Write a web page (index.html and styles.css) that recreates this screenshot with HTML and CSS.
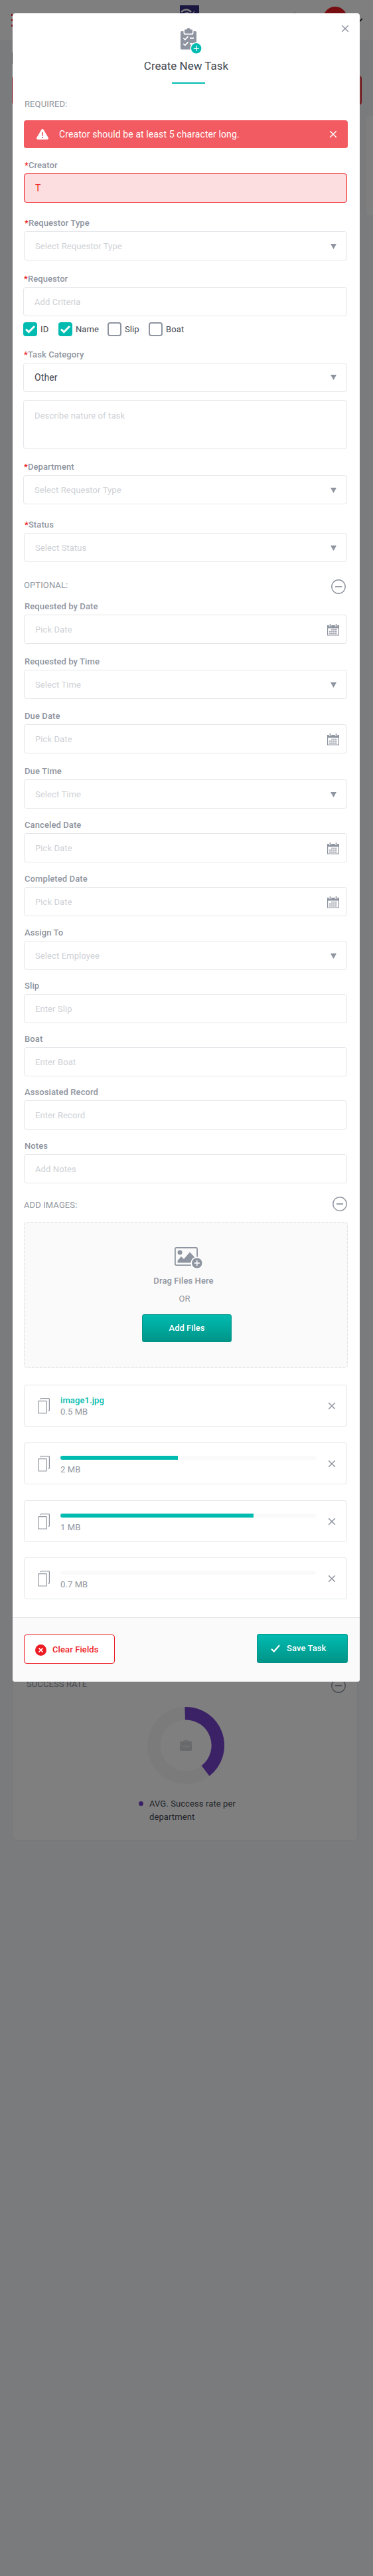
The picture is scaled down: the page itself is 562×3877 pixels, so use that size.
FILE: index.html
```html
<!DOCTYPE html>
<html lang="en">
<head>
<meta charset="utf-8">
<title>Create New Task</title>
<link rel="stylesheet" href="styles.css">
</head>
<body>
<svg class="sprite" aria-hidden="true">
  <symbol id="close" viewBox="0 0 12 12"><path d="M1.2 1.2l9.6 9.6M10.8 1.2L1.2 10.8" fill="none" stroke="currentColor" stroke-width="1.5"/></symbol>
  <symbol id="minus" viewBox="0 0 22 22"><circle cx="11" cy="11" r="10.2" fill="none" stroke="currentColor" stroke-width="1.4"/><path d="M6 11h10" stroke="currentColor" stroke-width="1.8"/></symbol>
  <symbol id="arrow" viewBox="0 0 9 8"><path d="M0 0h9L4.5 8z" fill="currentColor"/></symbol>
  <symbol id="calendar" viewBox="0 0 18 18">
    <path d="M0 2h18v15.500H0z" fill="currentColor"/><path d="M1.200 6.500h15.600v10H1.200z" fill="#fff"/>
    <path d="M4.500 0v4M13.500 0v4" stroke="#fff" stroke-width="3.600"/>
    <path d="M4.500 .8v3M13.500 .8v3" stroke="currentColor" stroke-width="1.700" stroke-linecap="round"/>
    <path d="M6.200 8.600h9M3.200 11.500h12M3.200 14.500h12" stroke="currentColor" stroke-width="1.900" stroke-dasharray="2 1"/>
  </symbol>
  <symbol id="copy" viewBox="0 0 18 24"><rect x=".6" y="4.600" width="12.800" height="18.400" rx="1" fill="none" stroke="currentColor" stroke-width="1.200"/><path d="M4.200 2.200V1.600q0-1 1-1h11.200q1 0 1 1v16.600q0 1-1 1h-.8" fill="none" stroke="currentColor" stroke-width="1.200"/></symbol>
  <symbol id="tick" viewBox="0 0 21 21"><path d="M4 10.500l4.300 4.200L17 6" fill="none" stroke="#fff" stroke-width="3"/></symbol>
</svg>

<div class="page">
  <header class="topbar">
    <span class="menu"><i></i><i></i><i></i></span>
    <svg class="logo" viewBox="0 0 29 29"><path fill="#352e83" d="M0 0h29v29H0z"/><path d="M2 10Q10 3 17 10M7 13q4-3 7 0" fill="none" stroke="#fff" stroke-width="2.500"/><path d="M19 13l3-4" stroke="#fff" stroke-width="1.200"/></svg>
    <span class="bell"></span>
    <span class="avatar"></span>
    <svg class="chev" viewBox="0 0 10 6"><path d="M1 1l4 4 4-4" fill="none" stroke="#000" stroke-width="1.500"/></svg>
  </header>
  <div class="heading-mark"></div>
  <div class="banner"></div>
  <div class="side-card"></div>
  <section class="rate">
    <div class="rate-head"><span>SUCCESS RATE</span><svg class="minus"><use href="#minus"/></svg></div>
    <svg class="donut" viewBox="-58 -58 116 116">
      <circle r="48.300" fill="none" stroke="#f6f6f6" stroke-width="19.400"/>
      <path d="M-1.300-48.300A48.300 48.300 0 0 1 29.600 38.200" fill="none" stroke="#7642cc" stroke-width="19.400"/>
      <g fill="#d0d2d6"><path d="M-9-6h18v12.500q0 1.500-1.500 1.500h-15q-1.500 0-1.500-1.500z"/><path d="M-3.500-6q0-1.700 1.500-1.700h4q1.500 0 1.500 1.700" fill="none" stroke="#d0d2d6"/><path d="M-8-4q1 6 4.500 6h7q3.500 0 4.500-6" fill="none" stroke="#f2f2f2"/><ellipse cy="1.300" rx="2.500" ry="1.600" stroke="#f2f2f2"/></g>
    </svg>
    <div class="legend"><i></i><span>AVG. Success rate per<br>department</span></div>
  </section>
</div>
<div class="overlay"></div>

<main class="modal">
  <div class="head">
    <svg class="dismiss"><use href="#close"/></svg>
    <svg class="clip" viewBox="0 0 32 40">
      <path d="M1.500 5H22.500q1.500 0 1.500 1.500V31q0 1.500-1.500 1.500h-21Q0 32.500 0 31V6.500Q0 5 1.500 5z" fill="#8f95a0"/>
      <path d="M4.500 3.500H19.500V8q0 2.300-2 2.300H6.500q-2 0-2-2.300z" fill="#fff"/>
      <path d="M6 2.500h3Q9.500 0 12 0t3 2.500h3V7q0 1.500-1.500 1.500h-9Q6 8.500 6 7z" fill="#8f95a0"/>
      <path d="M4.300 15.300l2.500 2.300 4.700-4.800M4.300 23.800l2.500 2.300 4.700-4.800M14 15.500h6M14 24h4" fill="none" stroke="#fff" stroke-width="1.800"/>
      <circle cx="23.700" cy="30.800" r="9.200" fill="#fff"/><circle cx="23.700" cy="30.800" r="7.700" fill="#00bbb0"/>
      <path d="M19.700 30.800h8M23.700 26.800v8" stroke="#fff" stroke-width="1.400"/>
    </svg>
    <h1>Create New Task</h1>
    <div class="rule"></div>
  </div>

  <form class="body">
    <div class="section first">REQUIRED:</div>
    <div class="alert">
      <svg class="warn" viewBox="0 0 18 16"><path d="M7.300 1.200Q9-1 10.700 1.200L17.600 13q1 2.600-1.300 3H1.700Q-.6 15.600.4 13z" fill="#fff"/><path d="M9 5v5.500M9 12v2" stroke="#f15b61" stroke-width="1.700"/></svg>
      <span>Creator should be at least 5 character long.</span>
      <svg class="x"><use href="#close"/></svg>
    </div>
    <div class="field g24"><label><b>*</b>Creator</label><div class="box error">T</div></div>
    <div class="field g29"><label><b>*</b>Requestor Type</label><div class="box">Select Requestor Type<svg class="arrow"><use href="#arrow"/></svg></div></div>
    <div class="field g26 wide"><label><b>*</b>Requestor</label><div class="box">Add Criteria</div></div>
    <div class="checks">
      <span class="check c1"><i class="on"><svg><use href="#tick"/></svg></i>ID</span>
      <span class="check c2"><i class="on"><svg><use href="#tick"/></svg></i>Name</span>
      <span class="check c3"><i></i>Slip</span>
      <span class="check"><i></i>Boat</span>
    </div>
    <div class="field g26 wide"><label><b>*</b>Task Category</label><div class="box value">Other<svg class="arrow"><use href="#arrow"/></svg></div></div>
    <div class="field wide area"><div class="box">Describe nature of task</div></div>
    <div class="field g25 wide"><label><b>*</b>Department</label><div class="box">Select Requestor Type<svg class="arrow"><use href="#arrow"/></svg></div></div>
    <div class="field g29"><label><b>*</b>Status</label><div class="box">Select Status<svg class="arrow"><use href="#arrow"/></svg></div></div>

    <div class="section optional"><span>OPTIONAL:</span><svg class="minus"><use href="#minus"/></svg></div>
    <div class="field g17"><label>Requested by Date</label><div class="box">Pick Date<svg class="cal"><use href="#calendar"/></svg></div></div>
    <div class="field g25"><label>Requested by Time</label><div class="box">Select Time<svg class="arrow"><use href="#arrow"/></svg></div></div>
    <div class="field g24"><label>Due Date</label><div class="box">Pick Date<svg class="cal"><use href="#calendar"/></svg></div></div>
    <div class="field g25"><label>Due Time</label><div class="box">Select Time<svg class="arrow"><use href="#arrow"/></svg></div></div>
    <div class="field g23"><label>Canceled Date</label><div class="box">Pick Date<svg class="cal"><use href="#calendar"/></svg></div></div>
    <div class="field g23"><label>Completed Date</label><div class="box">Pick Date<svg class="cal"><use href="#calendar"/></svg></div></div>
    <div class="field g23"><label>Assign To</label><div class="box">Select Employee<svg class="arrow"><use href="#arrow"/></svg></div></div>
    <div class="field g22"><label>Slip</label><div class="box">Enter Slip</div></div>
    <div class="field g22"><label>Boat</label><div class="box">Enter Boat</div></div>
    <div class="field g22"><label>Assosiated Record</label><div class="box">Enter Record</div></div>
    <div class="field g23"><label>Notes</label><div class="box">Add Notes</div></div>

    <div class="section images"><span>ADD IMAGES:</span><svg class="minus"><use href="#minus"/></svg></div>
    <div class="drop">
      <svg class="dashes"><rect x=".5" y=".5" width="487" height="219" rx="4"/></svg>
      <svg class="pic" viewBox="0 0 43 33">
        <rect x=".9" y=".9" width="33.200" height="26.200" rx="1.500" fill="none" stroke="#8f95a0" stroke-width="1.800"/>
        <circle cx="8" cy="8" r="3.500" fill="#8f95a0"/><path d="M4.500 23.500v-3L10 14l4 4 9-10.500L31 16v7.500z" fill="#8f95a0"/>
        <circle cx="33.800" cy="24" r="9.500" fill="#fff"/><circle cx="33.800" cy="24" r="7.800" fill="#8f95a0"/>
        <path d="M29.600 24H38M33.800 19.800v8.400" stroke="#fff" stroke-width="1.500"/>
      </svg>
      <strong>Drag Files Here</strong>
      <span class="or">OR</span>
      <button type="button" class="btn add">Add Files</button>
    </div>

    <div class="files">
      <div class="file"><svg class="copy"><use href="#copy"/></svg><div class="info"><strong>image1.jpg</strong><span>0.5 MB</span></div><svg class="x"><use href="#close"/></svg></div>
      <div class="file"><svg class="copy"><use href="#copy"/></svg><div class="info"><div class="bar"><i style="width:46%"></i></div><span>2 MB</span></div><svg class="x"><use href="#close"/></svg></div>
      <div class="file tight"><svg class="copy"><use href="#copy"/></svg><div class="info"><div class="bar"><i style="width:75.5%"></i></div><span>1 MB</span></div><svg class="x"><use href="#close"/></svg></div>
      <div class="file"><svg class="copy"><use href="#copy"/></svg><div class="info"><div class="bar"></div><span>0.7 MB</span></div><svg class="x"><use href="#close"/></svg></div>
    </div>
  </form>

  <footer class="foot">
    <button class="clear"><svg viewBox="0 0 17 17"><circle cx="8.500" cy="8.500" r="8.500" fill="#ed1c24"/><path d="M5.500 5.500l6 6M11.500 5.500l-6 6" stroke="#fff" stroke-width="1.700"/></svg>Clear Fields</button>
    <button class="btn save"><svg viewBox="0 0 14 12"><path d="M1 6.800l3.800 3.700L13 1.200" fill="none" stroke="#fff" stroke-width="2.200"/></svg>Save Task</button>
  </footer>
</main>
</body>
</html>
```

FILE: styles.css
```css
* { box-sizing: border-box; }
body { margin: 0; position: relative; height: 3877px; overflow-x: hidden; background: #f4f6fa; font: 13px/16px Roboto, sans-serif; letter-spacing: .1px; color: #8f95a0; }
svg { display: block; flex: none; }
.sprite { position: absolute; width: 0; height: 0; }

/* Dashboard behind the dialog */
.page { position: relative; height: 3877px; background: #f4f6fa; overflow: hidden; }
.topbar { position: relative; height: 60px; background: #fff; }
.menu { position: absolute; left: 17px; top: 21px; width: 20px; display: flex; flex-direction: column; gap: 5px; }
.menu i { height: 3px; background: #ed1c24; }
.logo { position: absolute; left: 271px; top: 8px; width: 29px; height: 29px; }
.bell { position: absolute; left: 442px; top: 19px; width: 4px; height: 4px; border-radius: 50%; background: #8f95a0; }
.avatar { position: absolute; left: 487px; top: 10px; width: 36px; height: 36px; border-radius: 50%; background: #ed1c24; }
.chev { position: absolute; left: 537px; top: 27px; width: 10px; height: 6px; }
.heading-mark { position: absolute; left: 18px; top: 79px; width: 3px; height: 17px; background: #8f95a0; }
.banner { position: absolute; left: 18px; top: 114px; width: 527px; height: 44px; border-radius: 4px; background: #f15b61; border: 1px solid #ed1c24; }
.side-card { position: absolute; left: 552px; top: 175px; width: 30px; height: 149px; border-radius: 4px; background: #fff; }
.rate { position: absolute; left: 19px; top: 2510px; width: 520px; height: 260px; padding: 16px 17px 0 20px; border: 1px solid #eceef0; border-radius: 5px; background: #fff; display: flex; flex-direction: column; }
.rate-head { display: flex; justify-content: space-between; height: 22px; line-height: 15px; }
.rate-head .minus { margin-top: -1px; }
.donut { width: 116px; height: 116px; margin: 20px 0 0 182px; }
.legend { display: flex; gap: 9px; margin: 20px 0 0 169px; line-height: 20px; color: #444852; }
.legend i { width: 7px; height: 7px; margin-top: 6px; border-radius: 50%; background: #7642cc; }
.overlay { position: absolute; inset: 0; background: rgba(0, 0, 0, .5); }

/* Dialog */
.modal { position: absolute; left: 19px; top: 20px; width: 523px; height: 2511px; border-radius: 4px; background: #fff; overflow: hidden; }
.head { position: relative; height: 106px; display: flex; flex-direction: column; align-items: center; padding-top: 22px; }
.dismiss { position: absolute; right: 16px; top: 17px; width: 12px; height: 12px; }
.clip { width: 32px; height: 40px; margin-left: 14px; }
h1 { margin: 7px 0 0; font-size: 17px; line-height: 20px; font-weight: 400; letter-spacing: 0; color: #444852; }
.rule { width: 50px; height: 2px; margin: 15px 0 0 7px; background: #00bbb0; }
.body { padding: 0 18px 0 17px; }
.section { display: flex; justify-content: space-between; line-height: 16px; }
.section.first { padding: 23px 0 0 1px; height: 55px; }
.alert { width: 488px; height: 42px; display: flex; align-items: center; padding: 0 16px 0 19px; border-radius: 4px; background: #f15b61; color: #fff; font-size: 14px; }
.warn { width: 18px; height: 16px; margin-right: 16px; }
.x { width: 12px; height: 12px; margin-left: auto; }
label { display: block; height: 22px; padding-left: 1px; font-weight: 500; line-height: 19px; }
label b { font-weight: 500; color: #ed1c24; }
.field { margin-top: 16px; width: 487px; }
.g17 { margin-top: 11px; }
.g22 { margin-top: 14px; }
.g23 { margin-top: 15px; }
.g24 { margin-top: 16px; }
.g25 { margin-top: 17px; }
.g26 { margin-top: 18px; }
.g29 { margin-top: 21px; }
.wide { width: 488px; margin-left: -1px; }
.box { height: 44px; display: flex; align-items: center; justify-content: space-between; padding: 1px 16px 0; border: 1px solid #e4e6e9; border-radius: 4px; color: #ced1d6; }
.box.value { padding-top: 0; font-size: 14px; color: #444852; }
.box.error { padding-top: 0; font-size: 14px; color: #ed1c24; background: #fcdee0; border-color: #ed1c24; }
.arrow { width: 9px; height: 8px; color: #8f95a0; margin-right: -1px; }
.cal { width: 18px; height: 18px; margin-right: -5px; color: #8f95a0; }
.checks { display: flex; margin: 9px 0 0 -1px; height: 21px; color: #444852; }
.check { display: flex; align-items: center; gap: 5px; }
.check i { width: 21px; height: 21px; border: 2px solid #8f95a0; border-radius: 4px; }
.check i.on { border: 0; background: #00bbb0; }
.check svg { width: 21px; height: 21px; }
.c1 { width: 53px; }
.c2 { width: 74px; }
.c3 { width: 62px; }
.area { margin-top: 12px; }
.area .box { height: 74px; align-items: flex-start; padding-top: 15px; }
.minus { width: 22px; height: 22px; }
.section.optional { margin: 26px 3px 0 0; height: 22px; line-height: 18px; }
.optional + .field { margin-top: 9px; }
.section.images { margin: 20px 1px 0 0; height: 22px; line-height: 26px; }
.drop { position: relative; width: 488px; height: 220px; margin-top: 16px; border-radius: 4px; background: #fafafa; display: flex; flex-direction: column; align-items: center; padding-top: 38px; }
.dashes { position: absolute; inset: 0; width: 488px; height: 220px; fill: none; stroke: #dfe1e4; stroke-dasharray: 4 2; }
.pic { width: 43px; height: 33px; margin-left: 9px; }
.drop strong { margin: 10px 7px 0 0; font-weight: 500; }
.or { margin: 11px 4px 0 0; }
.btn { border: 1px solid #009488; border-radius: 3px; background: linear-gradient(#00bbb0, #009488); color: #fff; font: 500 13px/16px Roboto, sans-serif; padding: 0; }
.add { width: 135px; height: 42px; margin: 15px 0 0 3px; }
.files { padding-top: 25px; }
.file { width: 487px; height: 63px; margin-bottom: 24px; display: flex; border: 1px solid #e4e6e9; border-radius: 4px; padding: 19px 16px 0 20px; }
.file.tight { margin-bottom: 23px; }
.copy { width: 18px; height: 24px; }
.info { width: 385px; margin-left: 16px; display: flex; flex-direction: column; }
.info strong { font-weight: 500; line-height: 15px; color: #00bbb0; margin-top: -4px; }
.info span { line-height: 16px; margin-top: 2px; }
.bar { height: 6px; margin-bottom: 5px; border-radius: 3px; background: #fafafa; overflow: hidden; }
.bar i { display: block; height: 6px; background: #00bbb0; }
.file .x { margin-top: 6px; }
.foot { position: absolute; left: 0; right: 0; bottom: 0; height: 97px; display: flex; justify-content: space-between; align-items: flex-start; padding: 24px 18px 0 17px; border-top: 1px solid #e4e6e9; background: #fafafa; }
.foot button { display: flex; align-items: center; width: 137px; height: 44px; letter-spacing: .1px; }
.foot .clear { margin-top: 1px; padding: 2px 0 0 16px; gap: 9px; border: 1px solid #ed1c24; border-radius: 4px; background: #fff; color: #ed1c24; font: 500 13px/16px Roboto, sans-serif; }
.clear svg { width: 17px; height: 17px; }
.foot .save { padding-left: 20px; gap: 10px; }
.save svg { width: 14px; height: 12px; }
```
